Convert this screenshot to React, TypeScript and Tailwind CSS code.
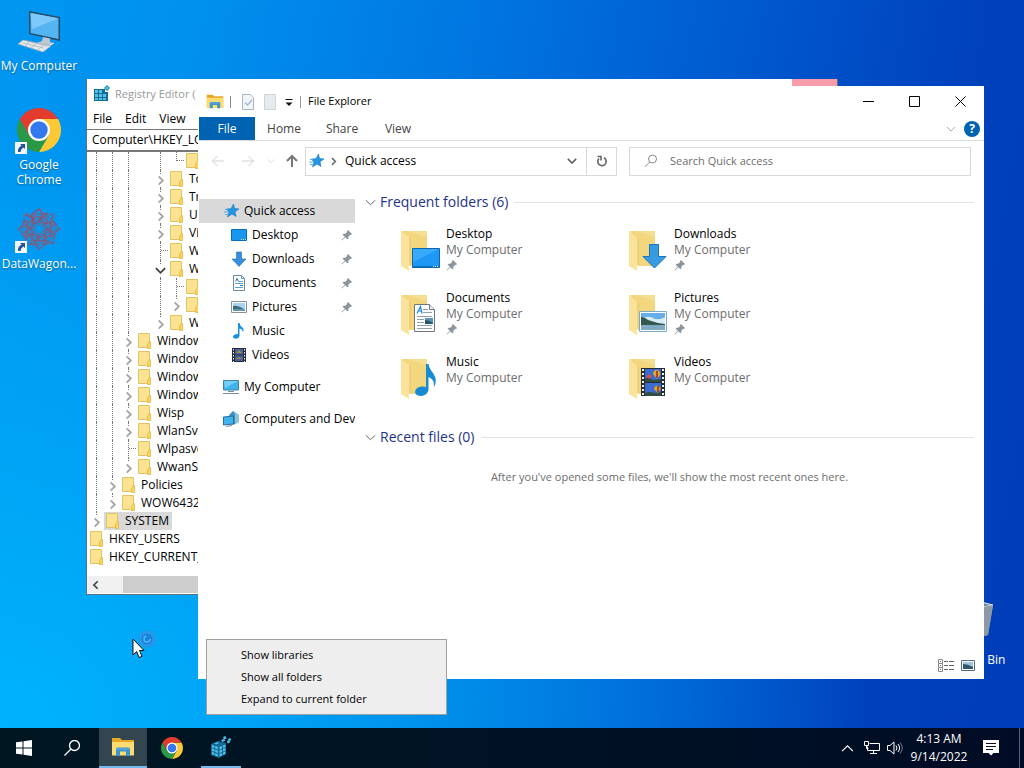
import type { ReactNode } from 'react';
import { clsx } from 'clsx';

interface TreeRow {
  name: string;
  level: number;
  state?: 'open' | 'closed' | 'leaf';
  last?: boolean;
  selected?: boolean;
}

const treeRows: TreeRow[] = [
  { name: '', level: 6, state: 'leaf', last: true },
  { name: 'Tokens', level: 5, state: 'closed' },
  { name: 'Tracing', level: 5, state: 'closed' },
  { name: 'UserData', level: 5, state: 'closed' },
  { name: 'Virtual', level: 5, state: 'closed' },
  { name: 'Wbem', level: 5, state: 'leaf' },
  { name: 'Win', level: 5, state: 'open' },
  { name: '', level: 6, state: 'leaf' },
  { name: '', level: 6, state: 'closed', last: true },
  { name: 'Win', level: 5, state: 'closed', last: true },
  { name: 'Windows', level: 3, state: 'closed' },
  { name: 'Windows', level: 3, state: 'closed' },
  { name: 'Windows', level: 3, state: 'closed' },
  { name: 'Windows', level: 3, state: 'closed' },
  { name: 'Wisp', level: 3, state: 'closed' },
  { name: 'WlanSvc', level: 3, state: 'closed' },
  { name: 'Wlpasvc', level: 3, state: 'leaf' },
  { name: 'WwanSvc', level: 3, state: 'closed', last: true },
  { name: 'Policies', level: 2, state: 'closed' },
  { name: 'WOW6432Node', level: 2, state: 'closed', last: true },
  { name: 'SYSTEM', level: 1, state: 'closed', last: true, selected: true },
  { name: 'HKEY_USERS', level: 0 },
  { name: 'HKEY_CURRENT_CONFIG', level: 0 },
];

const folders = [
  { name: 'Desktop', pinned: true },
  { name: 'Downloads', pinned: true },
  { name: 'Documents', pinned: true },
  { name: 'Pictures', pinned: true },
  { name: 'Music', pinned: false },
  { name: 'Videos', pinned: false },
];

function Chevron({ dir, className = '' }: { dir: 'up' | 'down' | 'right' | 'left'; className?: string }) {
  const paths = {
    up: 'M1 8.500L6 3.500L11 8.500',
    down: 'M1 3.500L6 8.500L11 3.500',
    right: 'M4 1.500L8.500 6L4 10.500',
    left: 'M8 1.500L3.500 6L8 10.500',
  };
  return (
    <svg className={clsx('shrink-0', className)} viewBox="0 0 12 12" fill="none" stroke="currentColor">
      <path d={paths[dir]} />
    </svg>
  );
}

function PinIcon() {
  return (
    <svg className="w-3 h-3 shrink-0 text-[#8b939b]" viewBox="0 0 12 12" fill="currentColor">
      <path d="M7 1L11 5L10 6L9.300 5.700L7.300 7.700L7.300 9.500L6.300 10.300L4.200 8.200L1 11.400L0.600 11L3.800 7.800L1.700 5.700L2.500 4.700L4.300 4.700L6.300 2.700L6 2Z" />
    </svg>
  );
}

function StarIcon() {
  return (
    <svg className="w-4 h-4 shrink-0" viewBox="0 0 16 16">
      <path d="M9.500 1L10.500 5.400L15 6L11 8.700L12 13.500L8 11L3.500 14L5 9L2.500 6L7 5.700Z" fill="#2196e3" stroke="#1578c0" strokeWidth=".6" />
      <path d="M1 6.500h3M0 9h4M1 11.500h3" stroke="#4ba9e8" strokeWidth=".9" />
    </svg>
  );
}

function TreeFolder() {
  return (
    <svg className="w-[13px] h-4 shrink-0" viewBox="0 0 13 16">
      <path d="M.5.5h11v14H.5z" fill="#fce391" stroke="#e3c262" />
      <path d="M11.500 8.500h1v7h-3v-4z" fill="#fbd45c" stroke="#dfb645" strokeWidth=".8" />
    </svg>
  );
}

function ExplorerIcon({ className }: { className: string }) {
  return (
    <svg className={className} viewBox="0 0 24 20">
      <path d="M1 2V1h8l2 2h12v15H1z" fill="#e5a725" />
      <path d="M1 5h22v13.500H1z" fill="#ffdc72" />
      <path d="M5 19v-7q0-1.500 1.500-1.500h11q1.500 0 1.500 1.500v7h-4v-4.500H9V19z" fill="#3d94cd" />
      <path d="M5 12h14" stroke="#65b5e4" />
    </svg>
  );
}

function RegistryIcon({ className }: { className: string }) {
  return (
    <svg className={className} viewBox="0 0 18 18">
      <path d="M1 4h11v3h3v9H1z" fill="#0f6f96" />
      <g fill="#55bfe5">
        <path d="M2 5h3v3H2zM6 5h3v3H6zM2 9h3v3H2zM6 9h3v3H6zM10 9h3v3h-3zM2 13h3v2H2zM6 13h3v2H6zM10 13h3v2h-3z" />
      </g>
      <path d="M14 0l3 3-3 3-3-3z" fill="#168eb2" />
      <path d="M14 1.500L15.500 3 14 4.500 12.500 3z" fill="#65d3ee" />
    </svg>
  );
}

function RegistryCubeIcon() {
  return (
    <svg className="w-6 h-6" viewBox="0 0 24 24">
      <path d="M2 9l7-3 8 2v11l-7 4-8-3z" fill="#146c94" />
      <g fill="#50c0ed">
        <path d="M3 10l2.300.7v2.500L3 12.500zM6.200 11l2.500.8v2.500l-2.500-.8zM3 13.600l2.300.7v2.500L3 16zM6.200 14.600l2.500.8v2.500l-2.500-.8zM3 17l2.300.8v2.300L3 19.400zM6.200 18.300l2.500.7v2.500l-2.500-.8z" />
        <path d="M10.500 12l2.500-1v2.500l-2.500 1zM14 10.600l2.300-1v2.500l-2.300 1zM10.500 15.500l2.500-1V17l-2.500 1zM14 14l2.300-1v2.500l-2.300 1zM10.500 19l2.500-1v2.500l-2.500 1zM14 17.500l2.300-1V19L14 20z" />
        <path d="M5 8.500l3-1.200 2.300.7-3 1.300zM12 5l3-1 1.500 1.500L13.500 7z" />
        <path d="M18 6l2.500-1 .5 2.500-2.500 1zM14 2l2.500-1 1 2.500-2.500 1zM19 4l2.500-1 .5 2.500-2.500.5z" />
      </g>
    </svg>
  );
}

function ChromeIcon({ className }: { className: string }) {
  return (
    <svg className={className} viewBox="0 0 48 48">
      <path d="M24 13H43.050A22 22 0 0 1 24 46L33.500 29.500Z" fill="#fcc934" />
      <path d="M33.500 29.500L24 46A22 22 0 0 1 4.950 13L14.500 29.500L24 35Z" fill="#2a9847" />
      <path d="M24 13H43.050A22 22 0 0 0 4.950 13L14.500 29.500Z" fill="#e33b2e" />
      <circle cx="24" cy="24" r="11" fill="#fff" />
      <circle cx="24" cy="24" r="8.700" fill="#3478ed" />
    </svg>
  );
}

function ShortcutBadge() {
  return (
    <svg className="absolute left-0 bottom-0 w-3 h-3" viewBox="0 0 12 12">
      <path d="M0 0h12v12H0z" fill="#f5f7fa" />
      <path d="M5 2h5v5L8.400 5.400Q5.500 7 5.500 10H3Q2.500 6 6.600 3.600z" fill="#23559d" />
    </svg>
  );
}

function ComputerIcon() {
  return (
    <svg className="w-12 h-12" viewBox="0 0 48 48">
      <path d="M14 4L45 10V34L14 27Z" fill="#284a63" />
      <path d="M15.500 6L43.500 11.300V32L15.500 26Z" fill="#55b5f3" />
      <path d="M15.500 6L43.500 11.300L17 22z" fill="#7dcafa" />
      <path d="M28 30l7 1.500v3.500l4 1-6 3.500-11-3.500 5-2z" fill="#bdc8d0" />
      <path d="M22 36l11 3.500 6-3.500" fill="none" stroke="#e6edf1" />
      <path d="M8 33L36 39L28 45L3 37Z" fill="#e3e7e9" stroke="#9bb0be" strokeWidth=".7" />
      <path d="M8 36l21 5M12 34l20 5M10 39l4-4M16 41l5-4M23 43l5-5" stroke="#a2adb5" strokeWidth=".6" />
    </svg>
  );
}

function WagonIcon() {
  const angles = [0, 45, 90, 135, 180, 225, 270, 315];
  return (
    <svg className="w-12 h-12" viewBox="0 0 48 48" fill="none">
      {angles.map((a) => (
        <g key={a} transform={`rotate(${a} 24 24)`}>
          <path d="M24 20L32 12L24 3L16 12Z" stroke="#5b729f" strokeWidth="1.200" />
          <path d="M24 17L29 8L38 10L35 19Z" stroke="#a8405e" strokeWidth=".9" />
          <path d="M17 19V9H31V19" stroke="#7a6288" strokeWidth=".9" />
          <path d="M19 12h10" stroke="#c03c50" strokeWidth=".9" />
        </g>
      ))}
    </svg>
  );
}

function SmallIcon({ name }: { name: string }) {
  const art: Record<string, ReactNode> = {
    Desktop: (
      <>
        <path d="M.5 2.500h15v11H.5z" fill="#1996f0" stroke="#086cb7" />
        <path d="M10 12.500h5" stroke="#bfe4ff" strokeDasharray="1 1" />
      </>
    ),
    Downloads: <path d="M5.500 1h5v7H15L8 15.500 1 8h4.500z" fill="#388ed8" stroke="#1670b8" strokeWidth=".6" />,
    Documents: (
      <>
        <path d="M2.500.5h8l3 3v12h-11z" fill="#fff" stroke="#71889a" />
        <path d="M10.500.5v3h3M4 8.500h8M4 12.500h8M8 6.500h4" fill="none" stroke="#59a0cf" />
        <path d="M4.500 6.500l1.500-3 1.500 3M9 10.500h3" fill="none" stroke="#147bc0" />
      </>
    ),
    Pictures: (
      <>
        <path d="M.5 2.500h15v11H.5z" fill="#fff" stroke="#87929b" />
        <path d="M2 4h12v8H2z" fill="#a5d5f2" />
        <path d="M2 7q5-1 12 4v1H2z" fill="#3e6d79" />
        <path d="M2 10h12v2H2z" fill="#6298b6" />
      </>
    ),
    Music: <path d="M7 0h1.500q.5 3 3 4.500 2 2 .3 5Q12 6 8.500 5.500V13q-.5 2.500-3.500 2.700Q2 15.500 2 13.500 2.500 11 7 11z" fill="#1591df" />,
    Videos: (
      <>
        <path d="M1 1h14v14H1z" fill="#262b34" />
        <path d="M4 2h8v5.500H4zM4 8.500h8V14H4z" fill="#4a619f" />
        <path d="M5 6l3-3 3 3zM5 12l3-2 3 2z" fill="#ab8a38" />
        <path d="M2.500 2v13M13.500 2v13" stroke="#eef1f3" strokeDasharray="1.500 1.500" />
      </>
    ),
    Computer: (
      <>
        <path d="M.5 1.500h15v9.500H.5z" fill="#3fb3ec" stroke="#3e81a6" />
        <path d="M1 2h14L2 9z" fill="#72cff8" />
        <path d="M5 12.500h6M0 14.500h16" stroke="#758c9a" />
      </>
    ),
    Network: (
      <>
        <path d="M6 4l4-4 6 4v7l-6 3z" fill="#3d8fc0" />
        <path d="M10 0l2 3v10l4-2V4z" fill="#8dc1dc" />
        <path d="M.5 6l10-1v8l-10 1z" fill="#41b3ed" stroke="#256e9b" />
        <path d="M3 15.500l6-1" stroke="#7b8f9e" />
      </>
    ),
  };
  return (
    <svg className="w-4 h-4 shrink-0" viewBox="0 0 16 16">
      {art[name]}
    </svg>
  );
}

function LargeFolder({ name }: { name: string }) {
  const art: Record<string, ReactNode> = {
    Desktop: (
      <>
        <path d="M11.500 18.500h27v19h-27z" fill="#1e98f5" stroke="#0a67ae" />
        <path d="M12 19h26L12 32z" fill="#39a9fa" />
        <path d="M12 36.500h26" stroke="#086fc2" />
        <path d="M32 36.500h6" stroke="#e7f5ff" strokeDasharray="1 1" />
      </>
    ),
    Downloads: <path d="M20.500 14.500h9v12h7.500L25.500 38 14 26.500h6.500z" fill="#369be2" stroke="#1974b9" />,
    Documents: (
      <>
        <path d="M13.500 10.500h15l5 5v22h-20z" fill="#fff" stroke="#70777e" />
        <path d="M28.500 10.500v5h5" fill="#e6eef3" stroke="#70777e" />
        <path d="M16 19.500l3.500-7 1.500 7M17.500 17h3" fill="none" stroke="#168bd0" strokeWidth="1.200" />
        <path d="M22 15.500h5M22 18.500h9M16 22.500h15M16 25.500h7M16 28.500h7M16 31.500h15M16 34.500h15" stroke="#8fa2af" />
        <path d="M24 24h8v6h-8z" fill="#5d94b4" />
        <path d="M24 26q4 0 8 3v1h-8z" fill="#23566f" />
      </>
    ),
    Pictures: (
      <>
        <path d="M10.500 17.500h27v20h-27z" fill="#fff" stroke="#7caac8" />
        <path d="M12 19h24v17H12z" fill="#65aee8" />
        <path d="M12 25q6-4 12-1t12-1v7H12z" fill="#d5ebf5" />
        <path d="M12 23q4 0 7 3 8 3 17 4v2H12z" fill="#31594d" />
        <path d="M12 31h24v5H12z" fill="#7facc4" />
      </>
    ),
    Music: <path d="M25 6h2.500q.5 4 4.500 9 5 7 1 14 .5-8-5.500-10v13q-1 5-7 6-6 0-6.500-4 .5-5 7-5.500 2-.2 4 .5z" fill="#168bd4" />,
    Videos: (
      <>
        <path d="M12 10h24v28H12z" fill="#272b33" />
        <path d="M16 11h16v13H16zM16 25h16v13H16z" fill="#3d6bd0" />
        <path d="M16 21q4-3 8 1l8-1v3H16zM16 35q5-2 9 0l7-1v4H16z" fill="#304f42" />
        <path d="M24 16q0-4 4-4 4 1 3 5l-3 4zM25 31q1-4 4-3l3 2-3 5z" fill="#e3a629" />
        <path d="M28 13v7M29 28v6" stroke="#8c3225" strokeWidth="1.500" />
        <path d="M17 19l3-3 3 2-2 3z" fill="#cb5143" />
        <path d="M14 11v27M34 11v27" stroke="#eef2f4" strokeWidth="2" strokeDasharray="2 2" />
      </>
    ),
  };
  return (
    <svg className="w-10 h-[42px] shrink-0" viewBox="0 0 40 42">
      <path d="M1 1h25v35H9z" fill="#f2d77f" />
      <path d="M6 1h20v6z" fill="#f5df92" />
      <path d="M0 1l9 7v27l-1 6-8-5z" fill="#fae29a" />
      <path d="M9 8v27" stroke="#e4c36b" />
      <path d="M7 37l2-2v6z" fill="#fff8e3" />
      {art[name]}
    </svg>
  );
}

function DesktopIcon({ label, shortcut, children }: { label: string; shortcut?: boolean; children: ReactNode }) {
  return (
    <button className="flex flex-col items-center h-[99px] w-full gap-[3px]">
      <span className="relative">
        {children}
        {shortcut && <ShortcutBadge />}
      </span>
      <span className="text-white leading-[15px] [text-shadow:0_1px_2px_#0006]">{label}</span>
    </button>
  );
}

function TreeItem({ row }: { row: TreeRow }) {
  const columns = Array.from({ length: row.level }, (_, i) => i);
  return (
    <li className="flex h-[18px] items-center whitespace-nowrap">
      {columns.map((c) => {
        const own = c === row.level - 1;
        return (
          <span key={c} className="flex w-4 h-full shrink-0 relative">
            {c !== 3 && (
              <span className={clsx('ml-2 border-l border-dotted border-[#777]', own && row.last ? 'h-1/2' : 'h-full')} />
            )}
            {own && row.state === 'leaf' && <span className="w-2 h-1/2 border-b border-dotted border-[#777]" />}
            {own && row.state !== 'leaf' && (
              <span className="absolute inset-x-0 top-1 bottom-0.5 bg-white flex items-center justify-center">
                <Chevron
                  dir={row.state === 'open' ? 'down' : 'right'}
                  className={clsx('w-[11px] h-[11px] stroke-2', row.state === 'open' ? 'text-[#404040]' : 'text-[#a6a6a6]')}
                />
              </span>
            )}
          </span>
        );
      })}
      <span className={clsx('flex items-center h-full gap-[3px] pl-[2px]', row.selected && 'bg-[#d9d9d9]')}>
        <TreeFolder />
        <span className="px-[3px]">{row.name}</span>
      </span>
    </li>
  );
}

function RegistryWindow() {
  return (
    <section className="absolute left-[86px] top-[79px] right-[186px] bottom-[133px] bg-white border border-t-0 border-[#5b7080] flex flex-col overflow-hidden">
      <header className="flex items-center h-[30px] pl-[6px] shrink-0">
        <RegistryIcon className="w-[18px] h-[18px]" />
        <h2 className="pl-1 text-[11px] text-[#999]">Registry Editor (</h2>
        <button aria-label="Close Registry Editor" className="ml-auto w-[45px] h-full bg-[#f79ca8]" />
      </header>
      <nav className="flex h-5 items-center gap-[13px] pl-[6px] shrink-0">
        <button>File</button>
        <button>Edit</button>
        <button>View</button>
      </nav>
      <div className="h-[23px] shrink-0 border-t border-b-2 border-[#777] flex items-center">
        <input
          aria-label="Registry path"
          className="w-full pl-[5px] outline-none"
          defaultValue="Computer\HKEY_LOCAL_MACHINE"
        />
      </div>
      <ul className="flex-1 min-h-0 overflow-hidden pl-px">
        {treeRows.map((row, i) => (
          <TreeItem key={i} row={row} />
        ))}
      </ul>
      <div className="flex h-[17px] shrink-0 bg-[#f0f0f0] mb-px">
        <button aria-label="Scroll left" className="w-[18px] flex items-center justify-center">
          <Chevron dir="left" className="w-[10px] h-[10px] stroke-2 text-[#444]" />
        </button>
        <div className="ml-[18px] w-2/3 bg-[#cdcdcd]" />
      </div>
    </section>
  );
}

function TitleBar() {
  return (
    <header className="flex items-center h-[31px] shrink-0 pl-2">
      <ExplorerIcon className="w-[18px] h-[15px]" />
      <span className="w-px h-3 bg-[#888] ml-[6px]" />
      <button aria-label="Properties" className="ml-[10px]">
        <svg className="w-[14px] h-4" viewBox="0 0 14 16" fill="none">
          <path d="M1.500.5h8l3 3v12h-11z" fill="#f1f5fa" stroke="#a9b4c1" />
          <path d="M4 8.500l2.500 2.500L11 6" stroke="#a3b6d0" strokeWidth="1.400" />
        </svg>
      </button>
      <button aria-label="New folder" className="ml-2">
        <svg className="w-[14px] h-4" viewBox="0 0 14 16">
          <path d="M1.500.5h11v15h-11z" fill="#e8ebee" stroke="#d0d4d8" />
        </svg>
      </button>
      <button aria-label="Customize toolbar" className="ml-[7px]">
        <svg className="w-[10px] h-[10px]" viewBox="0 0 10 10">
          <path d="M1.500 2.500h7" stroke="#111" />
          <path d="M1.500 5.500h7L5 9z" fill="#111" />
        </svg>
      </button>
      <span className="w-px h-3 bg-[#999] ml-[6px]" />
      <h1 className="pl-[7px] text-[11px]">File Explorer</h1>
      <div className="ml-auto flex h-full pr-px">
        <button aria-label="Minimize" className="w-[46px] flex items-center justify-center">
          <svg className="w-[11px] h-[11px]" viewBox="0 0 11 11"><path d="M0 5.500h11" stroke="#000" /></svg>
        </button>
        <button aria-label="Maximize" className="w-[46px] flex items-center justify-center">
          <svg className="w-[11px] h-[11px]" viewBox="0 0 11 11"><path d="M.5.5h10v10H.5z" fill="none" stroke="#000" /></svg>
        </button>
        <button aria-label="Close" className="w-[46px] flex items-center justify-center">
          <svg className="w-[11px] h-[11px]" viewBox="0 0 11 11"><path d="M.5.5l10 10M10.500.5l-10 10" stroke="#000" /></svg>
        </button>
      </div>
    </header>
  );
}

function Ribbon() {
  return (
    <nav className="flex h-6 shrink-0 border-b border-[#dadbdc] text-[#444]">
      <button className="w-14 ml-px bg-[#0063b1] text-white">File</button>
      <button className="w-[58px]">Home</button>
      <button className="w-[58px]">Share</button>
      <button className="w-[54px]">View</button>
      <div className="ml-auto flex items-center gap-2 pr-1">
        <button aria-label="Expand ribbon" className="flex">
          <Chevron dir="down" className="w-[10px] h-[10px] text-[#999]" />
        </button>
        <button aria-label="Help" className="w-4 h-4 rounded-full bg-[#0063b1] text-white font-bold leading-4">?</button>
      </div>
    </nav>
  );
}

function Arrow({ dir, className }: { dir: 'left' | 'right' | 'up'; className: string }) {
  const paths = {
    left: 'M13 7H1.500M6.500 2L1.500 7L6.500 12',
    right: 'M1 7H12.500M7.500 2L12.500 7L7.500 12',
    up: 'M7 13V2M2 7L7 2L12 7',
  };
  return (
    <svg className={clsx('w-[14px] h-[14px]', className)} viewBox="0 0 14 14" fill="none" stroke="currentColor">
      <path d={paths[dir]} />
    </svg>
  );
}

function AddressRow() {
  return (
    <div className="flex items-center h-10 shrink-0 px-[13px]">
      <button aria-label="Back"><Arrow dir="left" className="text-[#d0d0d0]" /></button>
      <button aria-label="Forward" className="ml-4"><Arrow dir="right" className="text-[#d0d0d0]" /></button>
      <button aria-label="Recent locations" className="ml-3">
        <Chevron dir="down" className="w-2 h-2 text-[#ccc]" />
      </button>
      <button aria-label="Up" className="ml-[10px]"><Arrow dir="up" className="stroke-2 text-[#777]" /></button>
      <div className="ml-[6px] h-[29px] w-[312px] shrink-0 border border-[#d9d9d9] flex items-center">
        <span className="pl-[3px]"><StarIcon /></span>
        <Chevron dir="right" className="ml-1 w-[9px] h-[9px] stroke-2 text-[#666]" />
        <button className="pl-[7px]">Quick access</button>
        <button aria-label="Previous locations" className="ml-auto mr-[9px]">
          <Chevron dir="down" className="w-[10px] h-[10px] stroke-2 text-[#666]" />
        </button>
        <button aria-label="Refresh" className="h-full w-[30px] border-l border-[#d9d9d9] flex items-center justify-center">
          <svg className="w-3 h-3" viewBox="0 0 12 12" fill="none" stroke="#666" strokeWidth="1.600">
            <path d="M8 2.800A4.200 4.200 0 1 1 3 3.500" />
            <path d="M1.500 1.500H5V5.500" />
          </svg>
        </button>
      </div>
      <label className="ml-3 h-[29px] flex-1 min-w-0 border border-[#d9d9d9] flex items-center pl-[14px] gap-3">
        <svg className="w-[14px] h-[14px] shrink-0" viewBox="0 0 14 14" fill="none" stroke="#888">
          <circle cx="8.500" cy="5" r="4" />
          <path d="M5.700 8L1 12.700" />
        </svg>
        <input
          aria-label="Search Quick access"
          placeholder="Search Quick access"
          className="w-full min-w-0 text-[11px] outline-none placeholder:text-[#6d6d6d]"
        />
      </label>
    </div>
  );
}

function Sidebar() {
  return (
    <nav className="w-[157px] shrink-0 pt-[18px] pl-px overflow-hidden whitespace-nowrap">
      <a href="#quick" className="flex h-6 items-center gap-1 pl-[25px] bg-[#d9d9d9]">
        <StarIcon />
        Quick access
      </a>
      {folders.map((item) => (
        <a key={item.name} href={`#${item.name}`} className="flex h-6 items-center gap-[5px] pl-8 pr-[2px]">
          <SmallIcon name={item.name} />
          {item.name}
          {item.pinned && <span className="ml-auto"><PinIcon /></span>}
        </a>
      ))}
      <a href="#computer" className="flex h-6 items-center gap-[5px] pl-6 mt-2">
        <SmallIcon name="Computer" />
        My Computer
      </a>
      <a href="#network" className="flex h-6 items-center gap-[5px] pl-6 mt-2">
        <SmallIcon name="Network" />
        Computers and Devices
      </a>
    </nav>
  );
}

function GroupHeader({ title }: { title: string }) {
  return (
    <div className="flex items-center h-6">
      <Chevron dir="down" className="w-[11px] h-[11px] text-[#555]" />
      <h2 className="pl-1 pr-[6px] text-sm text-[#1e3287] whitespace-nowrap">{title}</h2>
      <span className="h-px flex-1 bg-[#e2e2e2]" />
    </div>
  );
}

function FileExplorer() {
  return (
    <section className="absolute left-[198px] top-[86px] right-10 bottom-[49px] bg-white flex flex-col">
      <TitleBar />
      <Ribbon />
      <AddressRow />
      <div className="flex flex-1 min-h-0">
        <Sidebar />
        <main className="flex-1 min-w-0 pt-[9px] px-[10px] flex flex-col">
          <GroupHeader title="Frequent folders (6)" />
          <div className="grid grid-cols-[228px_228px] pl-9 pt-3">
            {folders.map((folder) => (
              <button key={folder.name} className="flex items-start h-16 gap-[5px] text-left">
                <span className="pt-1"><LargeFolder name={folder.name} /></span>
                <span className="flex flex-col leading-4">
                  <span>{folder.name}</span>
                  <span className="text-[#6d6d6d]">My Computer</span>
                  {folder.pinned && <span className="pt-px"><PinIcon /></span>}
                </span>
              </button>
            ))}
          </div>
          <div className="mt-[7px]">
            <GroupHeader title="Recent files (0)" />
          </div>
          <p className="mt-5 text-[11px] leading-4 text-center text-[#6d6d6d]">
            After you've opened some files, we'll show the most recent ones here.
          </p>
          <div className="mt-auto flex justify-end items-center gap-[7px] pb-[6px] -mr-px">
            <button aria-label="Details view">
              <svg className="w-4 h-[14px]" viewBox="0 0 16 14" fill="none" stroke="#666">
                <path d="M.5.5h4v4h-4zM.5 4.500h4v4h-4zM.5 8.500h4v4h-4z" stroke="#888" />
                <path d="M2 2.500h1M2 6.500h1M2 10.500h1M6 2.500h4M11 2.500h5M6 6.500h4M11 6.500h5M6 10.500h4M11 10.500h5" />
              </svg>
            </button>
            <button aria-label="Large icons view">
              <svg className="w-[14px] h-[14px]" viewBox="0 0 14 14">
                <path d="M.5 1.500h13v10H.5z" fill="#fff" stroke="#536a82" />
                <path d="M2 3h10v7H2z" fill="#9ec4de" />
                <path d="M2 5q5 0 10 3v2H2z" fill="#31576d" />
              </svg>
            </button>
          </div>
        </main>
      </div>
    </section>
  );
}

function Taskbar() {
  return (
    <footer className="h-10 shrink-0 flex bg-linear-to-r from-[#001722] to-[#000c25] text-white">
      <button aria-label="Start" className="w-12 flex items-center justify-center">
        <svg className="w-4 h-4" viewBox="0 0 16 16" fill="#fff">
          <path d="M0 2.300L6.500 1.400V7.500H0zM7.500 1.200L16 0V7.500H7.500zM0 8.500H6.500V14.600L0 13.700zM7.500 8.500H16V16L7.500 14.800z" />
        </svg>
      </button>
      <button aria-label="Search" className="w-12 flex items-center justify-center">
        <svg className="w-4 h-4" viewBox="0 0 16 16" fill="none" stroke="#fff" strokeWidth="1.300">
          <circle cx="10.500" cy="5.500" r="5" />
          <path d="M7 9L.5 15.500" />
        </svg>
      </button>
      <button aria-label="File Explorer" className="w-12 ml-[3px] bg-[#33454f] border-b-2 border-[#76b9ed] flex items-center justify-center">
        <ExplorerIcon className="w-6 h-5" />
      </button>
      <button aria-label="Google Chrome" className="w-12 flex items-center justify-center ml-px">
        <ChromeIcon className="w-6 h-6" />
      </button>
      <button aria-label="Registry Editor" className="w-10 ml-[5px] border-b-2 border-[#76b9ed] flex items-center justify-center">
        <RegistryCubeIcon />
      </button>
      <div className="ml-auto flex items-center">
        <button aria-label="Show hidden icons">
          <Chevron dir="up" className="w-[13px] h-[13px]" />
        </button>
        <button aria-label="Network" className="ml-[10px]">
          <svg className="w-4 h-4" viewBox="0 0 16 16" fill="none" stroke="#fff">
            <path d="M5.500 3.500h10v7H3.500v-4M9.500 10.500v3M6 13.500h7M.5 1.500h4v4h-4zM2.500 5.500v3h2" />
          </svg>
        </button>
        <button aria-label="Volume" className="ml-[7px]">
          <svg className="w-4 h-4" viewBox="0 0 16 16" fill="none" stroke="#fff">
            <path d="M.5 5.500h2.500L7 2v12L3 10.500H.5z" />
            <path d="M9 5.500q2 2.500 0 5M11 4q3.200 4 0 8" />
            <path d="M13 2.500q4.500 5.500 0 11" stroke="#778" />
          </svg>
        </button>
        <div className="ml-1 w-16 text-center leading-[18px]">
          <div>4:13 AM</div>
          <div>9/14/2022</div>
        </div>
        <button aria-label="Notifications" className="ml-3">
          <svg className="w-4 h-4" viewBox="0 0 16 16">
            <path d="M0 0h16v13h-5.500L8 15.500 5.500 13H0z" fill="#fff" />
            <path d="M3 3.500h10M3 6.500h10M3 9.500h7" stroke="#000c25" />
          </svg>
        </button>
        <button aria-label="Show desktop" className="ml-5 h-full w-[5px] border-l border-[#5a6275]" />
      </div>
    </footer>
  );
}

export default function App() {
  return (
    <div className="relative min-h-screen w-full overflow-hidden flex flex-col text-xs text-black font-['Open_Sans','Noto_Sans',sans-serif] bg-[linear-gradient(100deg,#0097f1_0%,#0091ee_16%,#0078e2_40%,#005ad0_64%,#0041bc_85%,#003db8_100%)]">
      <div className="relative flex-1 bg-[radial-gradient(ellipse_at_0%_100%,#00b8ffdd_0%,#00b0fa99_25%,#00b0fa00_60%)]">
        <div className="w-[78px] pt-[7px] flex flex-col">
          <DesktopIcon label="My Computer">
            <ComputerIcon />
          </DesktopIcon>
          <DesktopIcon label="Google Chrome" shortcut>
            <ChromeIcon className="w-12 h-12" />
          </DesktopIcon>
          <DesktopIcon label="DataWagon..." shortcut>
            <WagonIcon />
          </DesktopIcon>
        </div>

        {/* Recycle Bin sits behind the explorer window */}
        <div className="absolute right-3 bottom-[60px] w-[76px] flex flex-col items-center text-white">
          <svg className="w-12 h-[54px]" viewBox="0 0 48 54">
            <path d="M2 6l25-3 16 4-5 30-16 4-14-4z" fill="#9da9b4" />
            <path d="M2 6l22 5 19-4-16-4z" fill="#6e87a8" stroke="#e5edf4" />
            <path d="M24 11l19-4-5 30-15 4z" fill="#8c9aa5" />
          </svg>
          <span className="leading-4 whitespace-nowrap">Recycle Bin</span>
        </div>

        <RegistryWindow />
        <FileExplorer />

        <div role="menu" className="absolute left-[206px] bottom-[13px] w-[241px] py-1 bg-[#eee] border border-[#a0a0a0] flex flex-col text-[11px]">
          <button role="menuitem" className="h-[22px] pl-[34px] text-left">Show libraries</button>
          <button role="menuitem" className="h-[22px] pl-[34px] text-left">Show all folders</button>
          <button role="menuitem" className="h-[22px] pl-[34px] text-left">Expand to current folder</button>
        </div>

        {/* Mouse pointer with busy ring */}
        <svg className="absolute left-[132px] top-[629px] w-7 h-[30px]" viewBox="0 0 28 30">
          <circle cx="15" cy="10" r="7" fill="#1683dc" stroke="#2d96e5" strokeWidth="3" />
          <circle cx="15" cy="10" r="3" fill="none" stroke="#53b6f5" strokeWidth="1.500" strokeDasharray="13 6" />
          <path d="M1 10v16l3.700-3.500L7 28.500l3-1.200-2.500-5.800H12z" fill="#fff" stroke="#111" />
        </svg>
      </div>
      <Taskbar />
    </div>
  );
}
